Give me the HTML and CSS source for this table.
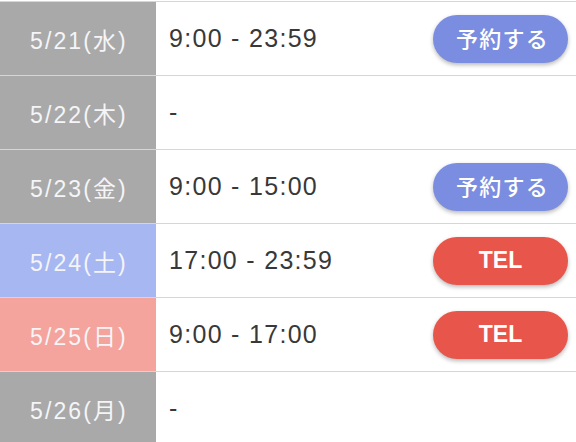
FILE: index.html
```html
<!DOCTYPE html>
<html lang="ja">
<head>
<meta charset="utf-8">
<link rel="stylesheet" href="styles.css">
</head>
<body>
<div class="schedule">
  <div class="row">
    <div class="date weekday">5/21(水)</div>
    <div class="time">9:00 - 23:59</div>
    <div class="action"><span class="btn reserve">予約する</span></div>
  </div>
  <div class="row">
    <div class="date weekday">5/22(木)</div>
    <div class="time">-</div>
    <div class="action"></div>
  </div>
  <div class="row">
    <div class="date weekday">5/23(金)</div>
    <div class="time">9:00 - 15:00</div>
    <div class="action"><span class="btn reserve">予約する</span></div>
  </div>
  <div class="row">
    <div class="date sat">5/24(土)</div>
    <div class="time">17:00 - 23:59</div>
    <div class="action"><span class="btn tel">TEL</span></div>
  </div>
  <div class="row">
    <div class="date sun">5/25(日)</div>
    <div class="time">9:00 - 17:00</div>
    <div class="action"><span class="btn tel">TEL</span></div>
  </div>
  <div class="row">
    <div class="date weekday">5/26(月)</div>
    <div class="time">-</div>
    <div class="action"></div>
  </div>
</div>
</body>
</html>
```
FILE: styles.css
```css
html, body {
  margin: 0;
  padding: 0;
  background: #ffffff;
}
body {
  font-family: "Liberation Sans", "Noto Sans CJK JP", sans-serif;
  overflow: hidden;
}
.schedule {
  padding-top: 1px;
}
.row {
  display: flex;
  align-items: stretch;
  height: 74px;
  box-sizing: border-box;
  border-top: 1px solid #d6d6d6;
}
.date {
  width: 156px;
  flex: none;
  display: flex;
  align-items: center;
  justify-content: center;
  padding-left: 2px;
  box-sizing: border-box;
  font-size: 23px;
  letter-spacing: 2.1px;
  color: #f5f5f7;
}
.weekday { background: #a9a9a9; }
.sat { background: #a7b7f2; }
.sun { background: #f4a39d; }
.time {
  flex: 1;
  display: flex;
  align-items: center;
  padding-left: 13px;
  font-size: 25px;
  letter-spacing: 1.3px;
  color: #383838;
}
.action {
  width: 143px;
  flex: none;
  display: flex;
  align-items: center;
}
.btn {
  display: flex;
  align-items: center;
  justify-content: center;
  width: 135px;
  height: 48px;
  border-radius: 24px;
  color: #ffffff;
  box-shadow: 0 2px 4px rgba(0, 0, 0, 0.28);
}
.reserve {
  background: #7a8de0;
  font-size: 22px;
  font-weight: 500;
  letter-spacing: 1.2px;
  padding: 0 0 3px 4px;
  box-sizing: border-box;
  font-family: "Noto Sans CJK JP", sans-serif;
}
.tel {
  background: #e8554a;
  font-size: 23px;
  font-weight: bold;
}
```
